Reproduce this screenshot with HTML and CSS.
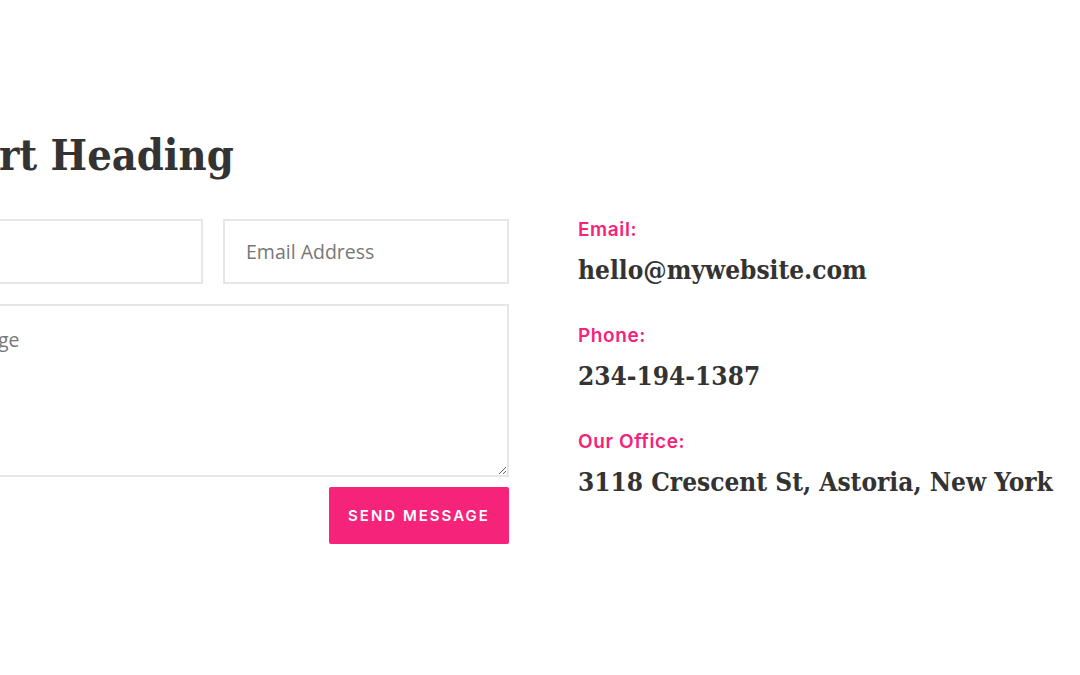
FILE: index.html
```html
<!DOCTYPE html>
<html lang="en">
<head>
<meta charset="utf-8">
<title>Contact</title>
<link rel="stylesheet" href="styles.css">
</head>
<body>
<main class="page">
  <h2 class="heading">Short Heading</h2>
  <div class="columns">
    <form class="form">
      <div class="row">
        <input class="field" type="text" placeholder="Name">
        <input class="field" type="email" placeholder="Email Address">
      </div>
      <textarea class="field message" placeholder="Message"></textarea>
      <div class="actions">
        <button class="send" type="button">Send Message</button>
      </div>
    </form>
    <div class="info">
      <div class="item">
        <div class="label">Email:</div>
        <div class="value">hello@mywebsite.com</div>
      </div>
      <div class="item">
        <div class="label">Phone:</div>
        <div class="value">234-194-1387</div>
      </div>
      <div class="item">
        <div class="label">Our Office:</div>
        <div class="value">3118 Crescent St, Astoria, New York</div>
      </div>
    </div>
  </div>
</main>
</body>
</html>
```
FILE: styles.css
```css
html, body {
  margin: 0;
  padding: 0;
  background: #ffffff;
  overflow: hidden;
}
.page {
  margin-left: -83px;
  padding-top: 127px;
  color: #333333;
}
.heading {
  margin: 0 0 36px;
  font-family: "DejaVu Serif Condensed", "DejaVu Serif", serif;
  font-weight: 700;
  font-size: 43px;
  line-height: 56px;
  color: #333333;
}
.columns {
  display: flex;
  gap: 69px;
  align-items: flex-start;
}
.form {
  width: 592px;
  display: flex;
  flex-direction: column;
  gap: 20px;
  flex-shrink: 0;
}
.row {
  display: flex;
  gap: 20px;
}
.field {
  box-sizing: border-box;
  border: 2px solid #e6e6e6;
  border-radius: 0;
  background: #fff;
  font-family: "Open Sans", "Roboto", sans-serif;
  font-size: 19.5px;
  color: #333;
  padding: 0 21px;
  outline: none;
}
.field::placeholder {
  color: #777777;
}
.row .field {
  flex: 1;
  height: 65px;
  min-width: 0;
}
.message {
  height: 173px;
  padding-top: 20px;
  resize: vertical;
  display: block;
}
.actions {
  display: flex;
  justify-content: flex-end;
  margin-top: -10px;
}
.send {
  width: 180px;
  height: 57px;
  border: none;
  border-radius: 2px;
  background: #f5237a;
  color: #ffffff;
  font-family: "Inter", "Lato", sans-serif;
  font-weight: 600;
  font-size: 15px;
  letter-spacing: 2px;
  text-transform: uppercase;
}
.info {
  display: flex;
  flex-direction: column;
  gap: 35px;
  padding-top: 0;
}
.item {
  display: flex;
  flex-direction: column;
  gap: 9px;
}
.label {
  font-family: "Inter", "Lato", sans-serif;
  font-weight: 600;
  font-size: 19px;
  letter-spacing: 0.6px;
  line-height: 22px;
  color: #f5237a;
}
.value {
  font-family: "DejaVu Serif Condensed", "DejaVu Serif", serif;
  font-weight: 700;
  font-size: 26px;
  line-height: 40px;
  color: #333333;
  white-space: nowrap;
}
```
